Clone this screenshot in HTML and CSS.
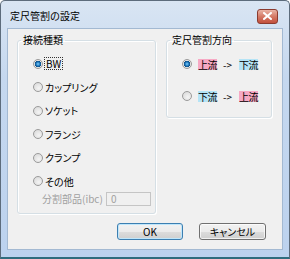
FILE: index.html
```html
<!DOCTYPE html>
<html lang="ja">
<head>
  <meta charset="UTF-8" />
  <title>定尺管割の設定</title>
  <link rel="stylesheet" href="styles.css">
</head>
<body>
  <div class="window">
    <div class="titlebar">
      <span class="title">定尺管割の設定</span>
      <span class="close">
        <svg width="9" height="8" viewBox="0 0 9 8">
          <path d="M1 1 L8 7 M8 1 L1 7" stroke="#fff" stroke-width="2" stroke-linecap="square" />
        </svg>
      </span>
    </div>

    <div class="client">
      <div class="groups">
        <fieldset class="group group-type">
          <legend>接続種類</legend>
          <div class="group-body">
            <label class="radio"><span class="dot checked"></span><span class="focus">BW</span></label>
            <label class="radio"><span class="dot"></span><span>カップリング</span></label>
            <label class="radio"><span class="dot"></span><span>ソケット</span></label>
            <label class="radio"><span class="dot"></span><span>フランジ</span></label>
            <label class="radio"><span class="dot"></span><span>クランプ</span></label>
            <label class="radio"><span class="dot"></span><span>その他</span></label>
            <div class="sub">
              <span class="sub-label">分割部品(ibc)</span>
              <span class="textbox">0</span>
            </div>
          </div>
        </fieldset>

        <fieldset class="group group-dir">
          <legend>定尺管割方向</legend>
          <div class="group-body">
            <label class="radio dir"><span class="dot checked"></span><span class="up">上流</span><span class="arrow">-&gt;</span><span class="down">下流</span></label>
            <label class="radio dir"><span class="dot"></span><span class="down">下流</span><span class="arrow">-&gt;</span><span class="up">上流</span></label>
          </div>
        </fieldset>
      </div>

      <div class="buttons">
        <button class="btn default">OK</button>
        <button class="btn">キャンセル</button>
      </div>
    </div>
  </div>
</body>
</html>
```

FILE: styles.css
```css
body {
  margin: 0;
  font-family: "Noto Sans CJK JP", "DejaVu Sans", sans-serif;
  font-size: 10px;
  color: #000;
  background: #fff;
}

.window {
  width: 290px;
  height: 259px;
  box-sizing: border-box;
  border: 1px solid #5d6c7c;
  border-bottom: 2px solid #2f6c7d;
  border-radius: 5px 5px 0 0;
  background: linear-gradient(#d9e5f3, #c5d8ef 30%, #bcd2ee);
  padding: 0 6px 7px 6px;
  display: flex;
  flex-direction: column;
}

.titlebar {
  height: 27px;
  display: flex;
  align-items: center;
  justify-content: space-between;
  padding: 0 5px 0 3px;
}

.title {
  font-size: 10px;
  line-height: 12px;
  margin-top: 3px;
}

.close {
  width: 19px;
  height: 13px;
  margin-top: 3px;
  border: 1px solid #8b3b2f;
  border-radius: 3px;
  background: linear-gradient(#eab4a6, #d57a66 50%, #c24f3c);
  display: flex;
  align-items: center;
  justify-content: center;
}

.client {
  flex: 1;
  background: #f0f0f0;
  border: 1px solid #a3b9d2;
  display: flex;
  flex-direction: column;
}

.groups {
  display: flex;
  align-items: flex-start;
  gap: 10px;
  margin: 4px 0 0 9px;
}

.group {
  margin: 0;
  padding: 0;
  box-sizing: border-box;
  border: 1px solid #d5dfe5;
  border-radius: 3px;
  box-shadow: inset 1px 1px 0 #fff, 1px 1px 0 #fff;
}

.group legend {
  line-height: 14px;
  padding: 0 2px;
  margin-left: 3px;
}

.group-body {
  display: flex;
  flex-direction: column;
  padding-left: 15px;
}

.group-type {
  width: 139px;
  height: 181px;
}

.group-type .group-body {
  padding-top: 5px;
}

.group-dir {
  width: 106px;
  height: 85px;
}

.group-dir .group-body {
  padding-top: 7px;
  gap: 12px;
}

.radio {
  height: 23.5px;
  display: flex;
  align-items: center;
  gap: 2px;
  line-height: 11px;
  font-feature-settings: "palt";
}

.radio.dir {
  height: 20px;
  gap: 0;
}

.dot {
  width: 10px;
  height: 10px;
  box-sizing: border-box;
  border-radius: 50%;
  border: 1px solid #9a9a9a;
  background: radial-gradient(circle at 60% 65%, #f4f4f4, #d6d6d6);
  flex: none;
}

.dot.checked {
  background: radial-gradient(circle, #7fd0ff 0, #1a73b8 2px, #0e4f86 3px, #e6e6e6 3.5px, #d0d0d0);
}

.focus {
  outline: 1px dotted #333;
  outline-offset: 0;
  padding: 0 1px;
}

.dir .dot {
  margin-right: 6px;
}

.up {
  background: #f7a9c4;
  letter-spacing: -0.5px;
}

.down {
  background: #b5e4f6;
  letter-spacing: -0.5px;
}

.arrow {
  margin: 0 7px 0 6px;
}

.sub {
  display: flex;
  align-items: center;
  margin: -2px 0 0 9px;
  color: #a0a0a0;
}

.sub-label {
  width: 64px;
  font-feature-settings: "palt";
}

.textbox {
  width: 45px;
  height: 14px;
  box-sizing: border-box;
  border: 1px solid #c5c5c5;
  background: #f0f0f0;
  padding-left: 4px;
  line-height: 12px;
}

.buttons {
  display: flex;
  justify-content: flex-end;
  gap: 16px;
  margin: 9px 16px 0 0;
}

.btn {
  height: 17px;
  padding: 0;
  font-family: inherit;
  font-size: 10px;
  line-height: 14px;
  color: #000;
  border: 1px solid #707070;
  border-radius: 3px;
  background: linear-gradient(#f2f2f2, #ebebeb 50%, #dddddd 50%, #cfcfcf);
  box-shadow: inset 0 0 0 1px rgba(255, 255, 255, 0.7);
  font-feature-settings: "palt";
}

.btn.default {
  width: 66px;
  border-color: #3c7fb1;
  box-shadow: inset 0 0 0 1px #bfe6fb;
}

.btn + .btn {
  width: 67px;
}
```
